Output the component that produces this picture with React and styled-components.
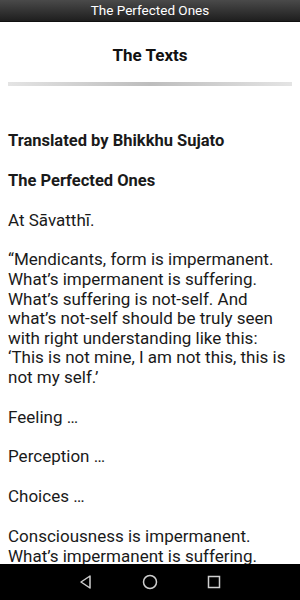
import React from "react";
import styled, { createGlobalStyle } from "styled-components";

const Global = createGlobalStyle`
  html, body {
    margin: 0;
    padding: 0;
    background: #ffffff;
  }
  body {
    font-family: Roboto, "Liberation Sans", sans-serif;
  }
`;

const Screen = styled.div`
  width: 300px;
  height: 600px;
  display: flex;
  flex-direction: column;
  overflow: hidden;
  background: #ffffff;
`;

const TitleBar = styled.div`
  height: 21px;
  flex-shrink: 0;
  background: linear-gradient(to bottom, #4a4a4a, #1e1e1e);
  color: #ffffff;
  font-size: 13.5px;
  line-height: 21px;
  text-align: center;
  border-bottom: 1px solid #111;
`;

const Content = styled.div`
  flex: 1;
  overflow: hidden;
  padding: 0 8px;
`;

const PageTitle = styled.h1`
  margin: 0;
  padding-top: 22px;
  font-size: 17px;
  font-weight: 700;
  color: #111;
  text-align: center;
  line-height: 22px;
`;

const Divider = styled.div`
  height: 4px;
  margin-top: 16px;
  background: linear-gradient(to right, #e4e4e4, #bdbdbd 50%, #e4e4e4);
`;

const Body = styled.div`
  padding-top: 45px;
`;

const Para = styled.p`
  margin: 0 0 20.2px;
  font-size: ${(p) => (p.$bold ? "16.5px" : "17px")};
  line-height: 19.6px;
  color: #1a1a1a;
  font-weight: ${(p) => (p.$bold ? 700 : 400)};
`;

const NavBar = styled.div`
  height: 36px;
  flex-shrink: 0;
  background: #000;
  display: flex;
  align-items: center;
  justify-content: center;
  gap: 46px;
`;

const NavIcon = styled.svg`
  width: 18px;
  height: 18px;
  display: block;
`;

export default function App() {
  return (
    <>
      <Global />
      <Screen>
        <TitleBar>The Perfected Ones</TitleBar>
        <Content>
          <PageTitle>The Texts</PageTitle>
          <Divider />
          <Body>
            <Para $bold>Translated by Bhikkhu Sujato</Para>
            <Para $bold>The Perfected Ones</Para>
            <Para>At Sāvatthī.</Para>
            <Para>
              “Mendicants, form is impermanent. What’s impermanent is suffering.
              What’s suffering is not-self. And what’s not-self should be truly
              seen with right understanding like this: ‘This is not mine, I am
              not this, this is not my self.’
            </Para>
            <Para>Feeling …</Para>
            <Para>Perception …</Para>
            <Para>Choices …</Para>
            <Para>
              Consciousness is impermanent. What’s impermanent is suffering.
              What’s suffering is not-self.
            </Para>
          </Body>
        </Content>
        <NavBar>
          <NavIcon viewBox="0 0 18 18">
            <path d="M13 3 L4 9 L13 15 Z" fill="none" stroke="#cfcfcf" strokeWidth="1.5" strokeLinejoin="round" />
          </NavIcon>
          <NavIcon viewBox="0 0 18 18">
            <circle cx="9" cy="9" r="6.5" fill="none" stroke="#cfcfcf" strokeWidth="1.5" />
          </NavIcon>
          <NavIcon viewBox="0 0 18 18">
            <rect x="3.5" y="3.5" width="11" height="11" fill="none" stroke="#cfcfcf" strokeWidth="1.5" />
          </NavIcon>
        </NavBar>
      </Screen>
    </>
  );
}
